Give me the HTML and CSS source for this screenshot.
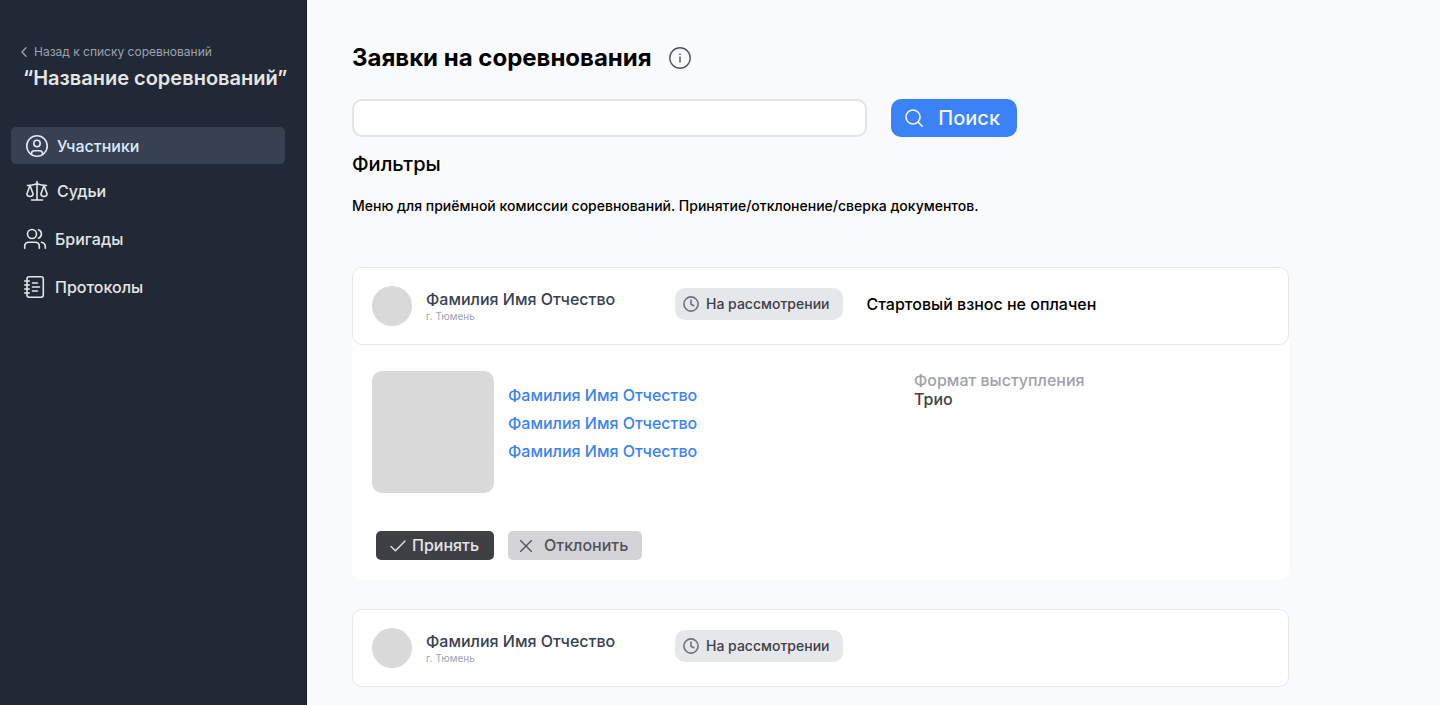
FILE: index.html
```html
<!DOCTYPE html>
<html lang="ru">
<head>
<meta charset="utf-8">
<meta name="viewport" content="width=device-width, initial-scale=1">
<title>Заявки на соревнования</title>
<link rel="stylesheet" href="styles.css">
</head>
<body>
<div class="layout">
  <aside class="sidebar">
    <a class="back" href="#">
      <svg class="icon" width="8" height="10" viewBox="0 0 8 10"><path d="M6 .8 2 5l4 4.200"/></svg>
      Назад к списку соревнований
    </a>
    <p class="event-name">“Название соревнований”</p>
    <nav class="menu">
      <a class="menu-link menu-link-wide menu-link-active" href="#" aria-current="page">
        <svg class="icon icon-bold" width="24" height="24" viewBox="0 0 24 24"><circle cx="12" cy="12" r="10.200"/><circle cx="12" cy="9.500" r="3.200"/><path d="M6.500 20.200v-.7q0-2.800 2.800-2.800h5.400q2.800 0 2.800 2.800v.7"/></svg>
        Участники
      </a>
      <a class="menu-link menu-link-wide" href="#">
        <svg class="icon icon-bold" width="24" height="24" viewBox="0 0 24 24"><path d="M12 2.500v18.300M6.500 21h11M2.500 6.500q5-.2 9.500-1.800 4.500 1.600 9.500 1.800M5 6.500 1.900 15q.3 2.500 3.100 2.500T8.100 15ZM19 6.500 15.900 15q.3 2.500 3.100 2.500t3.100-2.500Z"/></svg>
        Судьи
      </a>
      <a class="menu-link" href="#">
        <svg class="icon icon-bold" width="24" height="24" viewBox="0 0 24 24"><circle cx="9" cy="7" r="4.500"/><path d="M15.500 2.800q2.900 1 2.900 4.200t-2.900 4.200M1.700 21.300v-1.800q0-4.200 4.300-4.200h6q4.300 0 4.300 4.200v1.800M18.500 15.300q3.800.7 3.800 4.500v1.500"/></svg>
        Бригады
      </a>
      <a class="menu-link" href="#">
        <svg class="icon icon-bold" width="24" height="24" viewBox="0 0 24 24"><rect x="4" y="1.700" width="16.300" height="20.600" rx="2.200"/><path d="M1.700 6h4.600M1.700 10h4.600M1.700 14h4.600M1.700 18h4.600M9.500 8h5M9.500 12h7M9.500 16h5"/></svg>
        Протоколы
      </a>
    </nav>
  </aside>

  <main class="content">
    <div class="title-row">
      <h1 class="title">Заявки на соревнования</h1>
      <button class="info" type="button" aria-label="Информация">
        <svg class="icon" width="22" height="22" viewBox="0 0 22 22"><circle cx="11" cy="11" r="10.200"/><path d="M11 10v5M11 7v.4"/></svg>
      </button>
    </div>
    <form class="search" role="search">
      <input class="search-input" type="search" aria-label="Поиск заявок">
      <button class="search-button" type="button">
        <svg class="icon icon-bold" width="18" height="18" viewBox="0 0 18 18"><circle cx="8" cy="8" r="7"/><path d="m13.200 13.200 4 4"/></svg>
        Поиск
      </button>
    </form>
    <h2 class="filters">Фильтры</h2>
    <p class="hint">Меню для приёмной комиссии соревнований. Принятие/отклонение/сверка документов.</p>

    <div class="requests">
      <article class="request">
        <header class="request-head">
          <span class="avatar"></span>
          <div class="person">
            <h3 class="person-name">Фамилия Имя Отчество</h3>
            <p class="person-city">г. Тюмень</p>
          </div>
          <span class="status">
            <svg class="icon icon-bold" width="16" height="16" viewBox="0 0 16 16"><circle cx="8" cy="8" r="7.100"/><path d="M8 4v4.200l2.800 1.500"/></svg>
            На рассмотрении
          </span>
          <p class="fee">Стартовый взнос не оплачен</p>
        </header>
        <div class="request-body">
          <div class="details">
            <div class="photo"></div>
            <ul class="members">
              <li><a class="member" href="#">Фамилия Имя Отчество</a></li>
              <li><a class="member" href="#">Фамилия Имя Отчество</a></li>
              <li><a class="member" href="#">Фамилия Имя Отчество</a></li>
            </ul>
            <dl class="format">
              <dt class="format-label">Формат выступления</dt>
              <dd class="format-value">Трио</dd>
            </dl>
          </div>
          <div class="actions">
            <button class="action action-accept" type="button">
              <svg class="icon" width="16" height="12" viewBox="0 0 16 12"><path d="m1 6.500 4.500 4.300L15 1"/></svg>
              Принять
            </button>
            <button class="action action-reject" type="button">
              <svg class="icon" width="12" height="12" viewBox="0 0 12 12"><path d="m.5.5 11 11M11.500.5l-11 11"/></svg>
              Отклонить
            </button>
          </div>
        </div>
      </article>

      <article class="request">
        <header class="request-head">
          <span class="avatar"></span>
          <div class="person">
            <h3 class="person-name">Фамилия Имя Отчество</h3>
            <p class="person-city">г. Тюмень</p>
          </div>
          <span class="status">
            <svg class="icon icon-bold" width="16" height="16" viewBox="0 0 16 16"><circle cx="8" cy="8" r="7.100"/><path d="M8 4v4.200l2.800 1.500"/></svg>
            На рассмотрении
          </span>
        </header>
      </article>
    </div>
  </main>
</div>
</body>
</html>
```
FILE: styles.css
```css
* {
  box-sizing: border-box;
}

body,
h1,
h2,
h3,
p,
ul,
dl,
dd {
  margin: 0;
}

body {
  background: #f9fafc;
  color: #000;
  font-family: Inter, "Liberation Sans", sans-serif;
  font-size: 16px;
  font-weight: 500;
}

a {
  text-decoration: none;
}

button,
input {
  font: inherit;
}

button {
  border: 0;
  cursor: pointer;
}

.icon {
  flex: none;
  fill: none;
  stroke: currentColor;
  stroke-width: 1.400;
  stroke-linecap: round;
  stroke-linejoin: round;
}

.icon-bold {
  stroke-width: 1.600;
}

.layout {
  display: flex;
  min-height: 100vh;
}

/* Sidebar */
.sidebar {
  flex: none;
  width: 307px;
  padding: 42px 21px 24px 11px;
  border-right: 1px solid #111827;
  background: #212936;
}

.back {
  display: flex;
  align-items: center;
  gap: 6px;
  padding-left: 9px;
  color: #9ca3af;
  font-size: 12px;
  font-weight: 400;
  line-height: 20px;
}

.event-name {
  padding-left: 12px;
  color: #e5e5e5;
  font-size: 20px;
  font-weight: 600;
  line-height: 32px;
  white-space: nowrap;
}

.menu {
  display: flex;
  flex-direction: column;
  gap: 11px;
  margin-top: 33px;
}

.menu-link {
  display: flex;
  align-items: center;
  gap: 8px;
  height: 37px;
  padding-left: 12px;
  border-radius: 5px;
  color: #e5e5e5;
}

.menu-link-wide {
  padding-left: 14px;
}

.menu-link-active {
  margin-bottom: -3px;
  background: #374151;
  color: #dbeafe;
}

/* Content */
.content {
  flex: 1;
  min-width: 0;
  padding: 42px 151px 18px 45px;
}

.title-row {
  display: flex;
  align-items: center;
  gap: 17px;
}

.title {
  font-size: 24px;
  font-weight: 700;
  line-height: 32px;
}

.info {
  display: flex;
  padding: 0;
  background: none;
  color: #4b5563;
}

.search {
  display: flex;
  gap: 24px;
  margin-top: 25px;
}

.search-input {
  width: 55%;
  height: 38px;
  padding: 0 12px;
  border: 2px solid #e4e4e7;
  border-radius: 10px;
  background: #fff;
}

.search-button {
  display: flex;
  align-items: center;
  gap: 15px;
  height: 38px;
  padding: 0 17px 0 14px;
  border-radius: 10px;
  background: #3b82f6;
  color: #f3f4f6;
  font-size: 20px;
}

.filters {
  margin-top: 12px;
  font-size: 20px;
  font-weight: 500;
  line-height: 30px;
}

.hint {
  margin-top: 17px;
  font-size: 14px;
  line-height: 20px;
}

/* Requests */
.requests {
  display: flex;
  flex-direction: column;
  gap: 29px;
  margin-top: 51px;
}

.request {
  border-radius: 10px;
  background: #fff;
}

.request-head {
  display: flex;
  align-items: center;
  height: 78px;
  padding: 0 19px;
  border: 1px solid #e5e7eb;
  border-radius: 10px;
}

.avatar {
  flex: none;
  width: 40px;
  height: 40px;
  border-radius: 50%;
  background: #d9d9d9;
}

.person {
  width: 249px;
  padding-left: 14px;
}

.person-name {
  color: #374151;
  font-size: 16px;
  font-weight: 500;
  line-height: 20px;
}

.person-city {
  color: #9ca3af;
  font-size: 10px;
  font-weight: 400;
  line-height: 14px;
}

.status {
  display: flex;
  align-items: center;
  gap: 7px;
  height: 32px;
  margin: 0 24px 4px 14px;
  padding: 0 13px 0 8px;
  border-radius: 10px;
  background: #e5e7eb;
  color: #3f3f46;
  font-size: 14px;
  line-height: 18px;
  white-space: nowrap;
}

.status .icon {
  color: #6b7280;
}

.fee {
  margin-bottom: 4px;
}

.request-body {
  padding: 26px 20px 20px;
}

.details {
  display: flex;
}

.photo {
  flex: none;
  width: 122px;
  height: 122px;
  border-radius: 10px;
  background: #d9d9d9;
}

.members {
  flex: 1;
  padding: 10px 0 0 14px;
  line-height: 28px;
  list-style: none;
}

.member {
  color: #3b82f6;
}

.format {
  width: 355px;
  line-height: 19px;
}

.format-label {
  color: #a1a1aa;
}

.format-value {
  color: #3f3f46;
}

.actions {
  display: flex;
  gap: 14px;
  margin-top: 38px;
  padding-left: 4px;
}

.action {
  display: flex;
  align-items: center;
  height: 29px;
  border-radius: 5px;
  line-height: 19px;
}

.action-accept {
  gap: 6px;
  padding: 0 15px 0 14px;
  background: #3f3f46;
  color: #e4e4e7;
}

.action-reject {
  gap: 12px;
  padding: 0 14px 0 12px;
  background: #d4d4d8;
  color: #52525b;
}
```
